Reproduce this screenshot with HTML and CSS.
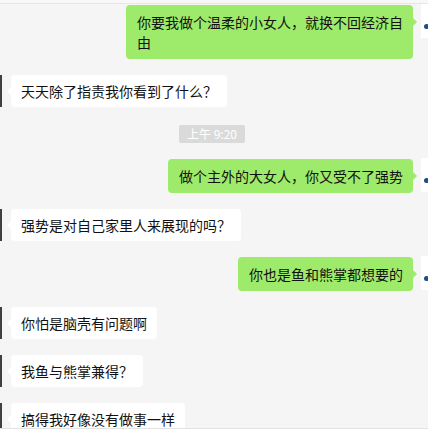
FILE: index.html
```html
<html lang="zh-CN">
  <head>
    <meta charset="UTF-8" />
    <meta name="viewport" content="width=device-width, initial-scale=1.0" />
    <title>聊天</title>
    <link rel="stylesheet" href="styles.css">
  </head>
  <body>
    <div class="header"></div>
    <div class="chat">
      <div class="row right first">
        <div class="bubble">你要我做个温柔的小女人，就换不回经济自由</div>
        <div class="avatar me"><span class="dot"></span></div>
      </div>
      <div class="row left">
        <div class="avatar other"></div>
        <div class="bubble">天天除了指责我你看到了什么？</div>
      </div>
      <div class="time"><span>上午 9:20</span></div>
      <div class="row right">
        <div class="bubble">做个主外的大女人，你又受不了强势</div>
        <div class="avatar me"><span class="dot"></span></div>
      </div>
      <div class="row left">
        <div class="avatar other"></div>
        <div class="bubble">强势是对自己家里人来展现的吗？</div>
      </div>
      <div class="row right">
        <div class="bubble">你也是鱼和熊掌都想要的</div>
        <div class="avatar me"><span class="dot"></span></div>
      </div>
      <div class="row left">
        <div class="avatar other"></div>
        <div class="bubble">你怕是脑壳有问题啊</div>
      </div>
      <div class="row left">
        <div class="avatar other"></div>
        <div class="bubble">我鱼与熊掌兼得？</div>
      </div>
      <div class="row left">
        <div class="avatar other"></div>
        <div class="bubble">搞得我好像没有做事一样</div>
      </div>
    </div>
    <div class="footer"></div>
  </body>
</html>
```

FILE: styles.css
```css
* {
  margin: 0;
  padding: 0;
  box-sizing: border-box;
}
html,
body {
  height: 100%;
}
body {
  background: #f5f5f5;
  font-family: "Microsoft YaHei", "Noto Sans CJK SC", sans-serif;
  font-size: 14px;
  color: #111;
  display: flex;
  flex-direction: column;
  overflow: hidden;
}
.header {
  height: 4px;
  background: #f8f8f8;
  border-bottom: 1px solid #e6e6e6;
  flex-shrink: 0;
}
.chat {
  flex: 1;
  overflow: hidden;
  margin: 0 -29px 0 -34px;
  padding-top: 1px;
}
.row {
  display: flex;
  align-items: flex-start;
  margin-top: 16px;
}
.row.first {
  margin-top: 0;
}
.right {
  justify-content: flex-end;
}
.avatar {
  width: 36px;
  height: 32px;
  flex-shrink: 0;
}
.other {
  background: linear-gradient(90deg, #555 0, #6b6b60 60%, #3c3c3c 100%);
}
.me {
  background: #fff;
  position: relative;
  height: 34px;
  margin-top: -1px;
}
.dot {
  position: absolute;
  left: 3px;
  top: 20px;
  width: 5px;
  height: 5px;
  border-radius: 50%;
  background: #1f4f7a;
}
.bubble {
  position: relative;
  max-width: 287px;
  line-height: 20px;
  border-radius: 4px;
}
.left .bubble {
  background: #fff;
  margin-left: 9px;
  padding: 6px 10px;
}
.right .bubble {
  background: #9eea6a;
  margin-right: 8px;
  padding: 7px 10px 7px 11px;
}
.bubble::before {
  content: "";
  position: absolute;
  top: 11px;
  border: 5px solid transparent;
}
.left .bubble::before {
  left: -9px;
  border-right-color: #fff;
}
.right .bubble::before {
  right: -9px;
  top: 12px;
  border-left-color: #9eea6a;
}
.time {
  display: flex;
  justify-content: center;
  margin: 18px 0 13px;
}
.time span {
  background: #dadada;
  color: #fff;
  font-size: 12px;
  line-height: 18px;
  padding: 0 8px;
  border-radius: 2px;
  margin-right: -1px;
}
.footer {
  height: 11px;
  background: #fff;
  border-top: 1px solid #e3e3e3;
  flex-shrink: 0;
}
```
